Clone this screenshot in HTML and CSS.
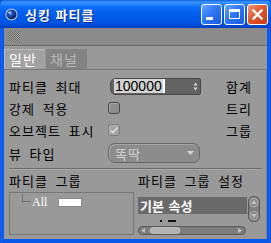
FILE: index.html
```html
<!DOCTYPE html>
<html lang="ko">
<head>
<meta charset="utf-8">
<title>싱킹 파티클</title>
<link rel="stylesheet" href="styles.css">
</head>
<body>
<div class="window">
  <div class="titlebar">
    <svg class="app-icon" width="13" height="13" viewBox="0 0 13 13">
      <defs>
        <radialGradient id="sph" cx="0.38" cy="0.35" r="0.65">
          <stop offset="0" stop-color="#7fa8ff"/>
          <stop offset="0.35" stop-color="#1f4fc0"/>
          <stop offset="1" stop-color="#081d5a"/>
        </radialGradient>
      </defs>
      <circle cx="6.5" cy="6.5" r="6" fill="#c9d3e6"/>
      <circle cx="6.5" cy="6.5" r="5" fill="url(#sph)"/>
      <circle cx="4.7" cy="4.5" r="1.1" fill="#d8e4ff"/>
    </svg>
    <span class="title">싱킹 파티클</span>
    <div class="tb-buttons">
      <div class="tb-btn"><span class="ico-min"></span></div>
      <div class="tb-btn"><span class="ico-max"></span></div>
      <div class="tb-btn close">
        <svg width="13" height="13" viewBox="0 0 13 13"><path d="M2.5 2.5 L10.5 10.5 M10.5 2.5 L2.5 10.5" stroke="#fff" stroke-width="2.4" stroke-linecap="square"/></svg>
      </div>
    </div>
  </div>
  <div class="frame">
    <div class="toolbar"><div class="grip"></div></div>
    <div class="tabs">
      <div class="tab active">일반</div>
      <div class="tab">채널</div>
    </div>
    <div class="panel">
      <div class="props">
        <div class="label">파티클 최대</div>
        <div class="ctrl">
          <div class="numfield">
            <span class="numsel">100000</span><span class="caret"></span>
            <svg class="spin" width="5" height="9" viewBox="0 0 5 9"><path d="M2.5 0.5 L4.5 3.5 L0.5 3.5 Z M0.5 5.5 L4.5 5.5 L2.5 8.5 Z" fill="#d8d8d8"/></svg>
          </div>
        </div>
        <div class="side">합계</div>

        <div class="label">강제 적용</div>
        <div class="ctrl"><span class="check"></span></div>
        <div class="side">트리</div>

        <div class="label">오브젝트 표시</div>
        <div class="ctrl">
          <span class="check on">
            <svg width="10" height="10" viewBox="0 0 10 10"><path d="M2 5.5 L4 7.5 L8.5 2.5" stroke="#dcdcdc" stroke-width="1.6" fill="none"/></svg>
          </span>
        </div>
        <div class="side">그룹</div>

        <div class="label">뷰 타입</div>
        <div class="ctrl">
          <div class="dropdown">
            <span>똑딱</span>
            <svg width="7" height="4" viewBox="0 0 7 4"><path d="M0 0 L7 0 L3.5 4 Z" fill="#d6d6d6"/></svg>
          </div>
        </div>
        <div class="side"></div>
      </div>
      <div class="sep"></div>
      <div class="groups">
        <div class="gcol gleft">
          <div class="ghead">파티클 그룹</div>
          <div class="treebox">
            <div class="node">
              <span class="conn"></span>
              <span class="all">All</span>
              <span class="swatch"></span>
            </div>
          </div>
        </div>
        <div class="gcol gright">
          <div class="ghead">파티클 그룹 설정</div>
          <div class="listwrap">
            <div class="list">
              <div class="item selected">기본 속성</div>
              <div class="peek"><span class="m1"></span><span class="m2"></span></div>
            </div>
            <div class="vscroll">
              <svg width="12" height="26" viewBox="0 0 12 26">
                <rect x="0.5" y="0.5" width="11" height="25" rx="5" fill="#7e7e7e" stroke="#5a5a5a"/>
                <rect x="2" y="2" width="8" height="9" rx="4" fill="#8c8c8c" stroke="#b4b4b4" stroke-width="0.8"/>
                <path d="M6 4 L8.3 8 L3.7 8 Z" fill="#c8c8c8"/>
                <rect x="2" y="15" width="8" height="9" rx="4" fill="#8c8c8c" stroke="#b4b4b4" stroke-width="0.8"/>
                <path d="M3.7 18 L8.3 18 L6 22 Z" fill="#c8c8c8"/>
              </svg>
            </div>
          </div>
          <div class="hscroll">
            <svg width="108" height="9" viewBox="0 0 108 9">
              <rect x="0.5" y="0.5" width="107" height="8" rx="4" fill="#7c7c7c" stroke="#5a5a5a"/>
              <path d="M3 4.5 L7 2 L7 7 Z" fill="#c0c0c0"/>
              <rect x="12" y="1.5" width="30" height="6" rx="3" fill="#b2b2b2" stroke="#cfcfcf" stroke-width="0.6"/>
              <path d="M104 4.5 L100 2 L100 7 Z" fill="#c0c0c0"/>
            </svg>
          </div>
        </div>
      </div>
    </div>
  </div>
</div>
</body>
</html>
```

FILE: styles.css
```css
* { box-sizing: border-box; }
html, body { margin: 0; padding: 0; background: #0054e3; }
body { width: 271px; height: 243px; overflow: hidden; font-family: "Noto Sans CJK KR", "Noto Sans", sans-serif; }

.window {
  width: 271px;
  height: 243px;
  display: flex;
  flex-direction: column;
  background: linear-gradient(to right, #0a4bd6 0, #1663f0 1px, #0a58e8 3px, #0a58e8 268px, #1663f0 270px, #0a3fc0 271px);
}

.titlebar {
  height: 28px;
  display: flex;
  align-items: center;
  padding: 0 3px 0 5px;
  background: linear-gradient(to bottom, #0a5fdb 0, #3d95ff 2px, #2a86ff 4px, #0d6ef8 7px, #0460ee 12px, #0058e6 18px, #0055e2 23px, #0048cc 26px, #003fc2 28px);
  border-radius: 6px 6px 0 0;
}
.app-icon { flex: none; margin-top: 1px; }
.title {
  margin-left: 7px;
  color: #fff;
  font-weight: bold;
  font-size: 13px;
  letter-spacing: 1px;
  text-shadow: 1px 1px 0 #0a2a8a;
  white-space: nowrap;
}
.tb-buttons { margin-left: auto; display: flex; gap: 2px; }
.tb-btn {
  width: 21px;
  height: 21px;
  border: 1px solid #fff;
  border-radius: 3px;
  background: linear-gradient(135deg, #6aa6ff 0, #2f77f5 45%, #1a59e0 100%);
  display: flex;
  align-items: center;
  justify-content: center;
  position: relative;
}
.tb-btn.close { background: linear-gradient(135deg, #f09a7c 0, #e0582e 45%, #c63a12 100%); }
.ico-min { width: 7px; height: 3px; background: #fff; margin: 8px 5px 0 0; }
.ico-max { width: 11px; height: 10px; border: 1px solid #fff; border-top-width: 3px; }

.frame {
  flex: 1;
  margin: 0 4px 4px 4px;
  background: #999999;
  display: flex;
  flex-direction: column;
}

.toolbar {
  height: 18px;
  background: #8b8b8b;
  border-bottom: 1px solid #6c6c6c;
  padding: 3px 0 0 4px;
}
.grip {
  width: 12px;
  height: 11px;
  background: repeating-conic-gradient(#6a6a6a 0 25%, #a2a2a2 0 50%) 0 0 / 2px 2px;
}

.tabs {
  height: 24px;
  display: flex;
  align-items: flex-end;
  padding-top: 3px;
  border-bottom: 1px solid #7a7a7a;
}
.tab {
  height: 20px;
  padding: 0 3px 0 4px;
  font-size: 14px;
  letter-spacing: 1px;
  line-height: 20px;
  background: #838383;
  color: #b8b8b8;
  margin-right: 1px;
  width: 41px;
}
.tab.active {
  background: #a2a2a2;
  color: #ffffff;
  border-top: 1px solid #b8b8b8;
  border-left: 1px solid #b8b8b8;
  line-height: 18px;
}

.panel {
  flex: 1;
  padding: 5px 0 0 5px;
  border-right: 1px solid #808080;
  display: flex;
  flex-direction: column;
}

.props {
  display: grid;
  grid-template-columns: 99px 93px 1fr;
  grid-template-rows: 22px 22px 22px 24px;
  font-size: 13px;
  letter-spacing: 1px;
  word-spacing: 3px;
  color: #000;
}
.label, .side, .ctrl { display: flex; align-items: center; white-space: nowrap; }
.side { padding-left: 25px; }

.numfield {
  margin-left: 2px;
  width: 91px;
  height: 17px;
  background: #636363;
  border: 1px solid #484848;
  border-radius: 6px 2px 2px 6px;
  display: flex;
  align-items: center;
  padding-left: 3px;
}
.numsel {
  background: #d2d2d2;
  color: #000;
  font-family: "Liberation Sans", Arial, sans-serif;
  font-size: 14px;
  letter-spacing: 0;
  height: 14px;
  line-height: 14px;
  padding: 0 1px;
}
.caret { width: 2px; height: 14px; background: #ffffff; }
.spin { margin-left: auto; margin-right: 2px; }

.check {
  width: 12px;
  height: 12px;
  border: 1px solid #4a4a4a;
  border-radius: 3px;
  background: #8e8e8e;
  box-shadow: inset 1px 1px 0 #a8a8a8;
  display: flex;
  align-items: center;
  justify-content: center;
}
.check.on {
  border-color: #7c7c7c;
  background: #a4a4a4;
  box-shadow: inset 1px 1px 0 #b8b8b8;
}

.dropdown {
  width: 92px;
  height: 20px;
  border: 1px solid #676767;
  border-radius: 7px;
  background: #8c8c8c;
  box-shadow: inset 1px 1px 0 #a6a6a6;
  display: flex;
  align-items: center;
  padding: 0 5px 0 6px;
  color: #d2d2d2;
}
.dropdown svg { margin-left: auto; }

.sep {
  margin: 3px 4px 0 0;
  height: 2px;
  border-top: 1px solid #6e6e6e;
  border-bottom: 1px solid #a8a8a8;
}

.groups { display: flex; gap: 4px; }
.gcol { display: flex; flex-direction: column; }
.ghead {
  height: 21px;
  display: flex;
  align-items: center;
  font-size: 13px;
  letter-spacing: 1px;
  word-spacing: 3px;
  white-space: nowrap;
  color: #000;
}
.treebox {
  margin-top: 1px;
  width: 125px;
  height: 43px;
  border: 1px solid #767676;
  padding: 1px 0 0 12px;
}
.node { display: flex; align-items: flex-start; }
.conn {
  width: 8px;
  height: 8px;
  border-left: 1px solid #6c6c6c;
  border-bottom: 1px solid #6c6c6c;
}
.all {
  margin: 2px 0 0 2px;
  font-family: "Liberation Serif", "Times New Roman", serif;
  font-size: 12px;
  line-height: 12px;
  color: #ffffff;
}
.swatch {
  margin: 4px 0 0 11px;
  width: 24px;
  height: 9px;
  background: #ffffff;
  border: 1px solid #8a8a8a;
}

.gright { width: 122px; }
.listwrap { margin-top: 5px; display: flex; gap: 1px; height: 26px; }
.list { width: 109px; height: 26px; overflow: hidden; padding-top: 1px; }
.item {
  height: 17px;
  line-height: 17px;
  font-size: 13px;
  word-spacing: 1px;
  padding-left: 2px;
  color: #000;
  white-space: nowrap;
}
.item.selected { background: #6a6a6a; color: #fff; font-weight: bold; }
.peek { display: flex; align-items: flex-end; height: 8px; padding-left: 22px; gap: 6px; }
.m1 { width: 2px; height: 2px; background: #111; }
.m2 { width: 8px; height: 2px; background: #111; }
.vscroll { width: 12px; height: 26px; }
.vscroll svg, .hscroll svg { display: block; }
.hscroll { margin-top: 4px; height: 9px; }
```
